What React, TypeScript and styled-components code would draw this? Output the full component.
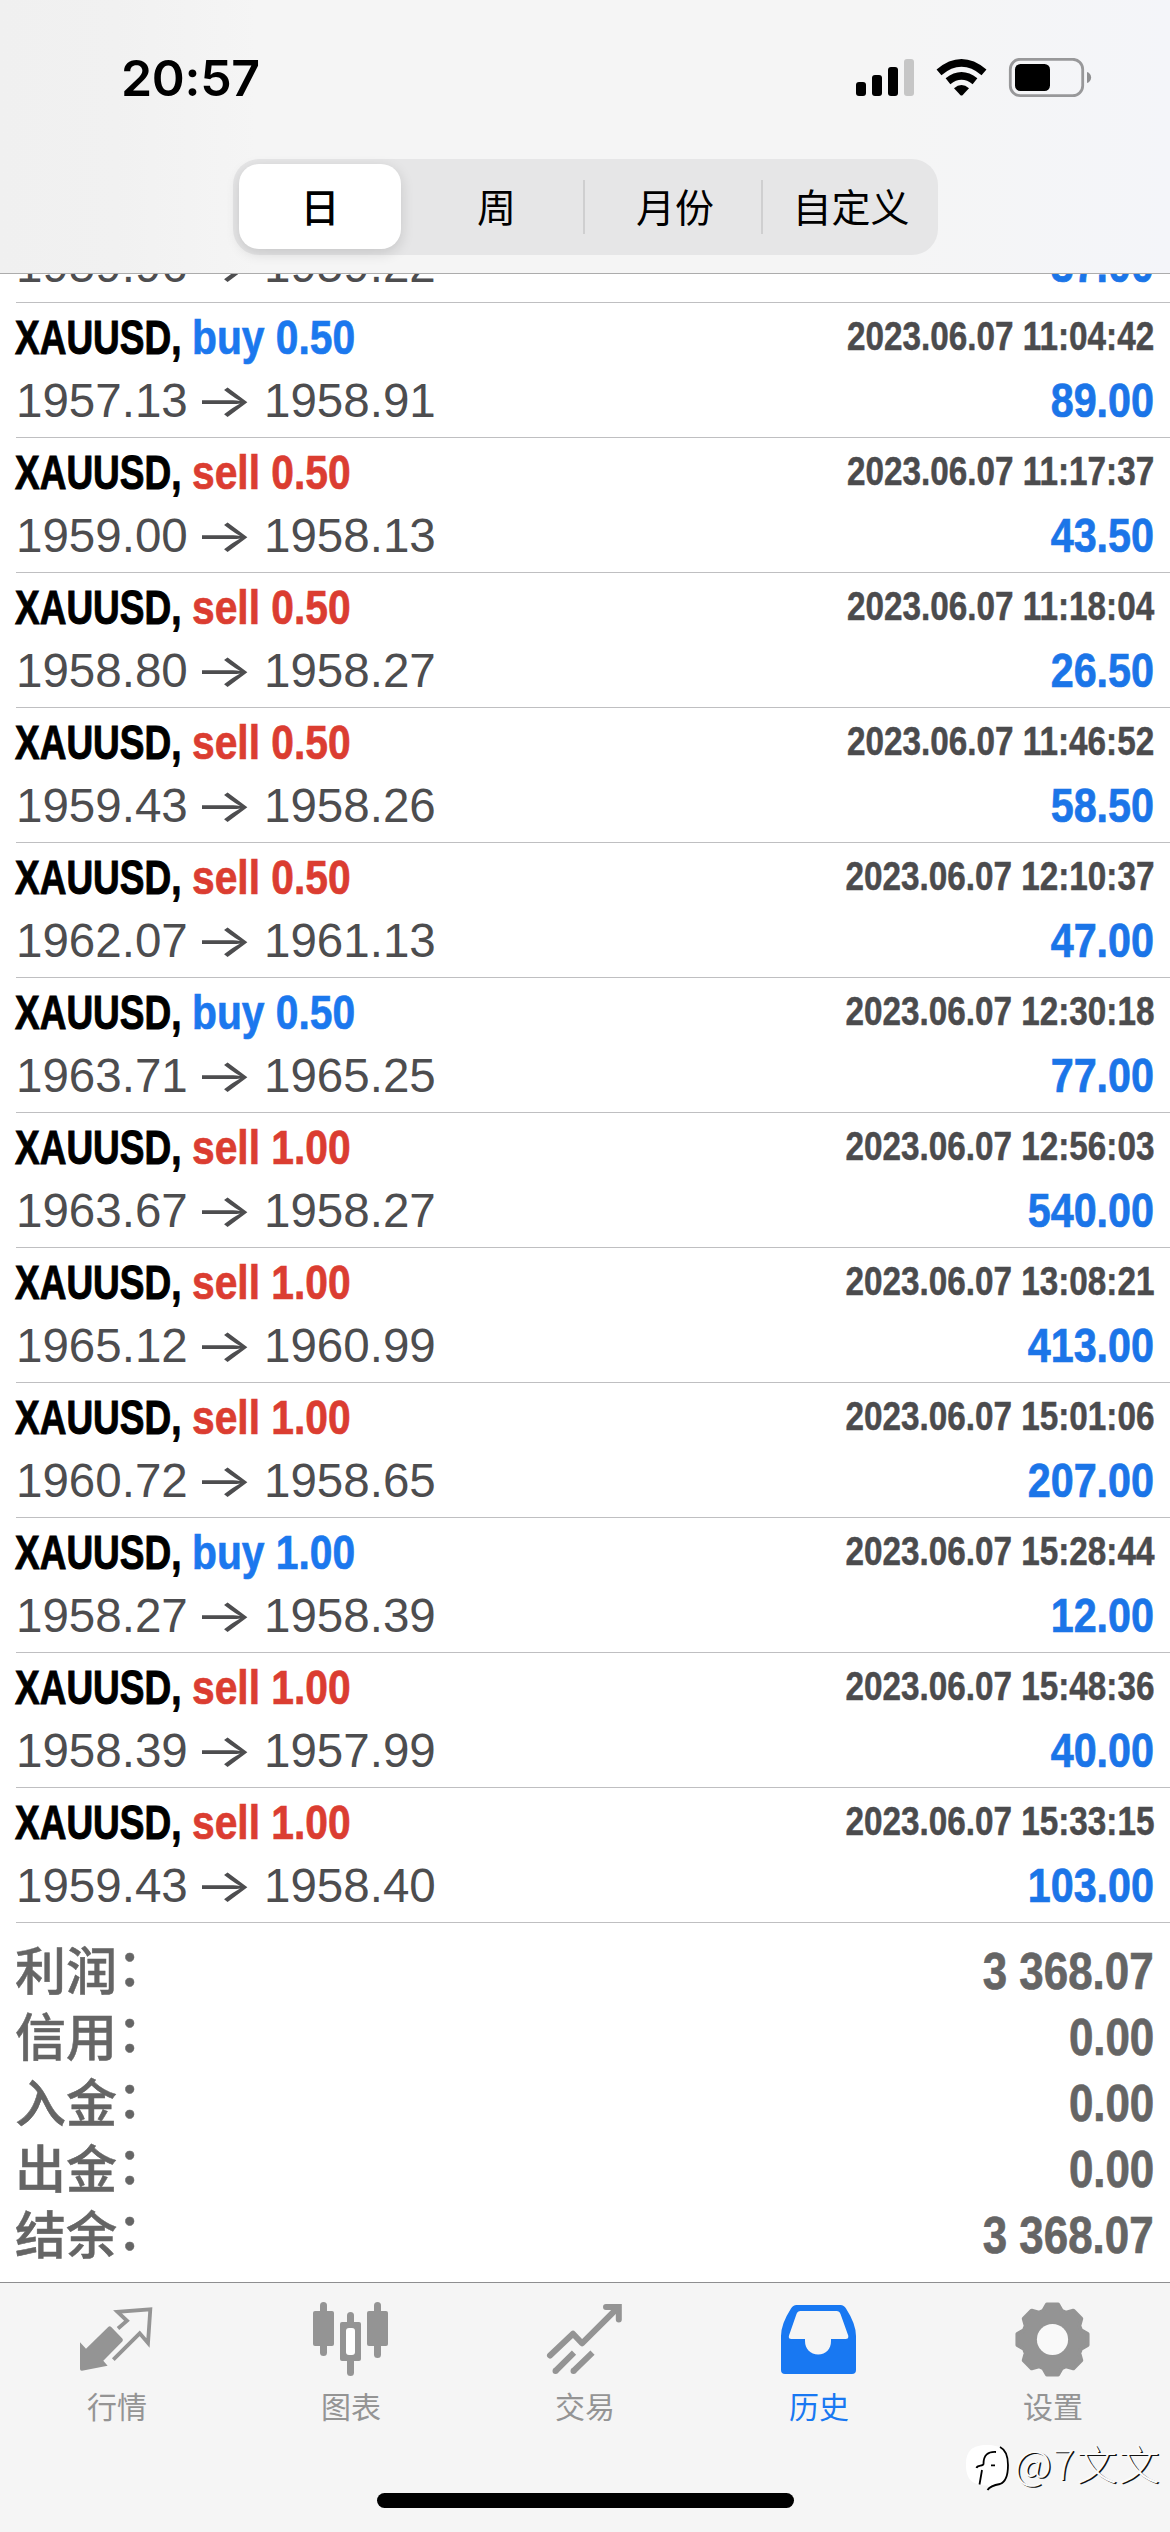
import React from "react";
import styled, { createGlobalStyle } from "styled-components";

const LATIN = `"Liberation Sans", Arial, "Noto Sans CJK SC", sans-serif`;
const CJK = `"Noto Sans CJK SC", "Liberation Sans", sans-serif`;

const GlobalStyle = createGlobalStyle`
  * { box-sizing: border-box; }
  body { margin: 0; background: #fff; }
`;

const Screen = styled.div`
  width: 1170px;
  height: 2532px;
  display: flex;
  flex-direction: column;
  overflow: hidden;
  background: #fff;
  font-family: ${LATIN};
`;

const Header = styled.header`
  flex: none;
  height: 274px;
  border-bottom: 1px solid #acacac;
  background: linear-gradient(90deg, #f0f0f0 0%, #f1f1f1 10%, #f5f5f5 22%, #f5f5f5 75%, #f4f5f9 100%);
`;

const StatusBar = styled.div`
  height: 159px;
  padding: 58px 78px 0 121px;
  display: flex;
  justify-content: space-between;
  align-items: flex-start;
`;

const Clock = styled.div`
  font: 600 50px/40px Inter, sans-serif;
  letter-spacing: -0.3px;
  color: #000;
`;

const StatusIcons = styled.svg`
  display: block;
  width: 240px;
  height: 44px;
`;

const Segments = styled.div`
  width: 705px;
  height: 96px;
  margin: 0 0 0 233px;
  padding: 5px 6px 6px;
  border-radius: 26px;
  background: #e6e6e7;
  display: grid;
  grid-template-columns: 162px 184px 178px 169px;
`;

const Segment = styled.button<{ $active?: boolean; $divided?: boolean; $shift?: number }>`
  border: 0;
  padding: 0 0 4px ${(p) => p.$shift ?? 0}px;
  display: flex;
  align-items: center;
  justify-content: center;
  white-space: nowrap;
  font: ${(p) => (p.$active ? 500 : 400)} 39px/50px ${CJK};
  color: #000;
  border-radius: ${(p) => (p.$active ? "20px" : "0")};
  box-shadow: ${(p) => (p.$active ? "0 4px 14px rgba(0,0,0,0.14)" : "none")};
  background: ${(p) =>
    p.$active
      ? "#fff"
      : p.$divided
      ? "linear-gradient(#cfcfd0, #cfcfd0) right 0 center / 2px 54px no-repeat"
      : "transparent"};
`;

const Content = styled.main`
  flex: none;
  height: 2008px;
  overflow: hidden;
`;

const DealList = styled.div`
  margin-top: -106px;
  padding-left: 16px;
`;

const Deal = styled.div`
  height: 135px;
  padding: 2px 16px 0 0;
  border-bottom: 1px solid #bfbfc1;
  display: grid;
  grid-template-rows: 64px 63px;
`;

const Line = styled.div`
  display: flex;
  align-items: center;
  white-space: nowrap;
  line-height: 60px;
`;

const Symbol = styled.span`
  width: 178px;
  margin-left: -1px;
  font-size: 49px;
  font-weight: 700;
  color: #000;
  -webkit-text-stroke: 1px #000;
  transform: scaleX(0.755);
  transform-origin: left center;
`;

const Side = styled.span<{ $side: string }>`
  flex: 1;
  margin-left: -1px;
  font-size: 49px;
  font-weight: 700;
  color: ${(p) => (p.$side === "buy" ? "#1b78ee" : "#db3d31")};
  -webkit-text-stroke: 0.7px currentColor;
  transform: scaleX(0.832);
  transform-origin: left center;
`;

const Stamp = styled.span`
  margin-top: -2px;
  font-size: 40px;
  font-weight: 700;
  color: #4b4b4d;
  -webkit-text-stroke: 0.5px currentColor;
  transform: scaleX(0.832);
  transform-origin: right center;
`;

const Price = styled.span`
  width: 172px;
  padding-top: 1px;
  font-size: 48px;
  color: #4d4d4f;
  transform: scaleX(0.99);
  transform-origin: left center;
`;

const Arrow = styled.span`
  width: 76px;
  padding-right: 3px;
  padding-bottom: 2px;
  text-align: center;
  font-family: Inter, sans-serif;
  font-size: 46px;
  font-weight: 400;
  color: #4d4d4f;
  transform: scaleX(1.35);
`;

const Profit = styled.span`
  flex: 1;
  padding-top: 1px;
  text-align: right;
  font-size: 48px;
  font-weight: 700;
  color: #1b75e8;
  -webkit-text-stroke: 0.7px currentColor;
  transform: scaleX(0.86);
  transform-origin: right center;
`;

const Summary = styled.div`
  padding: 15px 16px 0;
`;

const SummaryRow = styled.div`
  height: 66px;
  display: flex;
  align-items: center;
  justify-content: space-between;
  color: #656565;
`;

const SummaryLabel = styled.span`
  display: flex;
  margin-left: -1px;
  padding-bottom: 6px;
  font: 500 51px/60px ${CJK};
  -webkit-text-stroke: 0.5px currentColor;
`;

const Colon = styled.span`
  margin-top: -4px;
`;

const SummaryValue = styled.span`
  padding-top: 2px;
  font-size: 51px;
  line-height: 60px;
  font-weight: 700;
  -webkit-text-stroke: 0.7px currentColor;
  transform: scaleX(0.86);
  transform-origin: right center;
`;

const Footer = styled.footer`
  position: relative;
  flex: 1;
  border-top: 1px solid #8e8e90;
  background: #f5f5f5;
  display: flex;
  flex-direction: column;
  align-items: center;
`;

const Tabs = styled.nav`
  width: 100%;
  height: 210px;
  display: grid;
  grid-template-columns: repeat(5, 1fr);
`;

const Tab = styled.div<{ $active?: boolean }>`
  padding-top: 15px;
  display: flex;
  flex-direction: column;
  align-items: center;
  color: ${(p) => (p.$active ? "#1878f2" : "#949494")};
`;

const TabIcon = styled.svg`
  width: 80px;
  height: 80px;
`;

const TabLabel = styled.span`
  margin-top: 7px;
  font: 400 30px/40px ${CJK};
`;

const HomeIndicator = styled.div`
  width: 417px;
  height: 15px;
  border-radius: 8px;
  background: #000;
`;

const Watermark = styled.div`
  position: absolute;
  right: 9px;
  bottom: 34px;
  display: flex;
  align-items: center;
`;

const WatermarkLogo = styled.svg`
  width: 52px;
  height: 60px;
`;

const WatermarkText = styled.span`
  padding-bottom: 11px;
  font: 300 41px/49px ${CJK};
  letter-spacing: 1.4px;
  color: #fafafa;
  text-shadow: 1.5px 1px 0 #111;
`;

interface DealData {
  action?: string;
  open: string;
  close: string;
  time?: string;
  profit: string;
}

const deals: DealData[] = [
  { open: "1959.96", close: "1959.22", profit: "37.00" },
  { action: "buy 0.50", open: "1957.13", close: "1958.91", time: "2023.06.07 11:04:42", profit: "89.00" },
  { action: "sell 0.50", open: "1959.00", close: "1958.13", time: "2023.06.07 11:17:37", profit: "43.50" },
  { action: "sell 0.50", open: "1958.80", close: "1958.27", time: "2023.06.07 11:18:04", profit: "26.50" },
  { action: "sell 0.50", open: "1959.43", close: "1958.26", time: "2023.06.07 11:46:52", profit: "58.50" },
  { action: "sell 0.50", open: "1962.07", close: "1961.13", time: "2023.06.07 12:10:37", profit: "47.00" },
  { action: "buy 0.50", open: "1963.71", close: "1965.25", time: "2023.06.07 12:30:18", profit: "77.00" },
  { action: "sell 1.00", open: "1963.67", close: "1958.27", time: "2023.06.07 12:56:03", profit: "540.00" },
  { action: "sell 1.00", open: "1965.12", close: "1960.99", time: "2023.06.07 13:08:21", profit: "413.00" },
  { action: "sell 1.00", open: "1960.72", close: "1958.65", time: "2023.06.07 15:01:06", profit: "207.00" },
  { action: "buy 1.00", open: "1958.27", close: "1958.39", time: "2023.06.07 15:28:44", profit: "12.00" },
  { action: "sell 1.00", open: "1958.39", close: "1957.99", time: "2023.06.07 15:48:36", profit: "40.00" },
  { action: "sell 1.00", open: "1959.43", close: "1958.40", time: "2023.06.07 15:33:15", profit: "103.00" },
];

const totals = [
  ["利润", "3 368.07"],
  ["信用", "0.00"],
  ["入金", "0.00"],
  ["出金", "0.00"],
  ["结余", "3 368.07"],
];

const gearPoints = Array.from({ length: 8 }, (_, i) =>
  [
    [-18, 30],
    [-9, 35.5],
    [9, 35.5],
    [18, 30],
  ].map(([offset, r]) => {
    const a = ((i * 45 + offset) * Math.PI) / 180;
    return `${(39.5 + r * Math.sin(a)).toFixed(2)},${(41.5 - r * Math.cos(a)).toFixed(2)}`;
  })
)
  .flat()
  .join(" L");

const icons: Record<string, React.ReactNode> = {
  行情: (
    <>
      <path
        d="M3 44.3 L9 50.7 L31.2 29 Q32.7 27.5 34.2 29 L45.3 40.4 Q46.6 42 45.3 43.5 L26.3 62.7 L30.6 67.7 L5 72.8 Q3 73 3 71Z"
        fill="currentColor"
      />
      <path
        d="M41 30.5 L50 22.8 L40.5 13.8 L73.3 11.3 L71 45 L62.7 35.3 L36.3 61.7"
        fill="none"
        stroke="currentColor"
        strokeWidth="3.8"
      />
    </>
  ),
  图表: (
    <>
      <g fill="currentColor">
        <rect x="2" y="13" width="21" height="35" rx="2" />
        <rect x="9" y="4" width="7" height="54" rx="3.5" />
        <rect x="29" y="24" width="21" height="39" rx="2" />
        <rect x="36" y="14" width="7" height="64" rx="3.5" />
        <rect x="56" y="13" width="21" height="35" rx="2" />
        <rect x="63" y="4" width="7" height="56" rx="3.5" />
      </g>
      <rect x="35" y="30" width="9" height="27" rx="3" fill="#fff" />
    </>
  ),
  交易: (
    <g fill="none" stroke="currentColor" strokeWidth="6">
      <path d="M5 57.5 L28 35.7 L37 45.3 L73 9.5" strokeLinecap="round" strokeLinejoin="round" />
      <path d="M61 9 H73.8 V21.5" strokeLinecap="round" />
      <path d="M10.5 73 L29 54.7 M28.5 73 L47.5 54.7" />
      <path d="M10.5 73 h.01 M28.5 73 h.01" strokeLinecap="round" />
    </g>
  ),
  历史: (
    <>
      <path
        d="M17.5 7 H61.5 Q65 7 67 10.5 Q77 26 77 38 V72 Q77 76 73 76 H6 Q2 76 2 72 V38 Q2 26 12 10.5 Q14 7 17.5 7Z"
        fill="currentColor"
      />
      <path
        d="M21.5 13 H57.5 Q60.5 13 61.5 16 L69.2 37.5 Q70 41 66.5 41 H52 V43 C52 51 47 56.5 39.2 56.5 C31.5 56.5 26 51 26 43 V41 H12.5 Q9 41 10 37.5 L17.5 16 Q18.5 13 21.5 13Z"
        fill="#f5f5f5"
      />
    </>
  ),
  设置: (
    <>
      <path
        d={`M${gearPoints}Z`}
        fill="currentColor"
        stroke="currentColor"
        strokeWidth="4"
        strokeLinejoin="round"
      />
      <circle cx="39.5" cy="41.5" r="15.6" fill="#f9f9f9" />
    </>
  ),
};

function StatusGlyphs() {
  return (
    <StatusIcons viewBox="852 58 240 44">
      <rect x="856" y="82" width="10" height="14" rx="3" />
      <rect x="872" y="75" width="10" height="21" rx="3" />
      <rect x="888" y="67" width="10" height="29" rx="3" />
      <rect x="904" y="59" width="10" height="37" rx="3" fill="#c6c6c6" />
      <g fill="none" stroke="#000" strokeWidth="7.6">
        <path d="M939 72.3 Q961.5 53.5 984 72.3" />
        <path d="M948 81.2 Q961.5 70.5 975 81.2" />
      </g>
      <path d="M954 88.3 Q961.5 81.5 969 88.3 L962.5 95.2 Q961.5 96 960.5 95.2Z" />
      <rect x="1010.3" y="59.3" width="72.4" height="36.4" rx="10" fill="none" stroke="#98989a" strokeWidth="2.8" />
      <rect x="1015" y="64" width="35" height="27" rx="5.5" />
      <path d="M1087 72 C1092.500 73.500 1092.500 81.500 1087 83Z" fill="#8f8f91" />
    </StatusIcons>
  );
}

export default function App() {
  return (
    <Screen>
      <GlobalStyle />
      <Header>
        <StatusBar>
          <Clock>20:57</Clock>
          <StatusGlyphs />
        </StatusBar>
        <Segments>
          <Segment $active>日</Segment>
          <Segment $divided $shift={7}>周</Segment>
          <Segment $divided $shift={2}>月份</Segment>
          <Segment $shift={7}>自定义</Segment>
        </Segments>
      </Header>
      <Content>
        <DealList>
          {deals.map(({ action, open, close, time, profit }) => (
            <Deal key={open + close}>
              <Line>
                {action && (
                  <>
                    <Symbol>XAUUSD,</Symbol>
                    <Side $side={action.split(" ")[0]}>{action}</Side>
                    <Stamp>{time}</Stamp>
                  </>
                )}
              </Line>
              <Line>
                <Price>{open}</Price>
                <Arrow>→</Arrow>
                <Price>{close}</Price>
                <Profit>{profit}</Profit>
              </Line>
            </Deal>
          ))}
        </DealList>
        <Summary>
          {totals.map(([label, value]) => (
            <SummaryRow key={label}>
              <SummaryLabel>
                {label}
                <Colon>：</Colon>
              </SummaryLabel>
              <SummaryValue>{value}</SummaryValue>
            </SummaryRow>
          ))}
        </Summary>
      </Content>
      <Footer>
        <Tabs>
          {Object.keys(icons).map((name) => (
            <Tab key={name} $active={name === "历史"}>
              <TabIcon viewBox="0 0 80 80">{icons[name]}</TabIcon>
              <TabLabel>{name}</TabLabel>
            </Tab>
          ))}
        </Tabs>
        <HomeIndicator />
        <Watermark>
          <WatermarkLogo viewBox="0 0 52 60">
            <path
              d="M25 7 C40 7 46 13 46 27 C46 40 42 47 32 47.500 L27 51 L26 47.500 C10 47.500 4 41 4 27 C4 13 10 7 25 7Z"
              fill="#fff"
            />
            <g fill="none" stroke="#000" strokeWidth="1.8">
              <path d="M38 9 C44 12 46 18 46 27 C46 36 44 44 38 46 C32 47 28 48 25.500 52" />
              <path d="M34 14 C26 13.500 21.500 17 21.500 26 C21 28.500 15 26.500 14.500 30" />
              <path d="M20 32 L17.500 46.500 M29 27.300 H33" />
            </g>
          </WatermarkLogo>
          <WatermarkText>@7文文</WatermarkText>
        </Watermark>
      </Footer>
    </Screen>
  );
}
